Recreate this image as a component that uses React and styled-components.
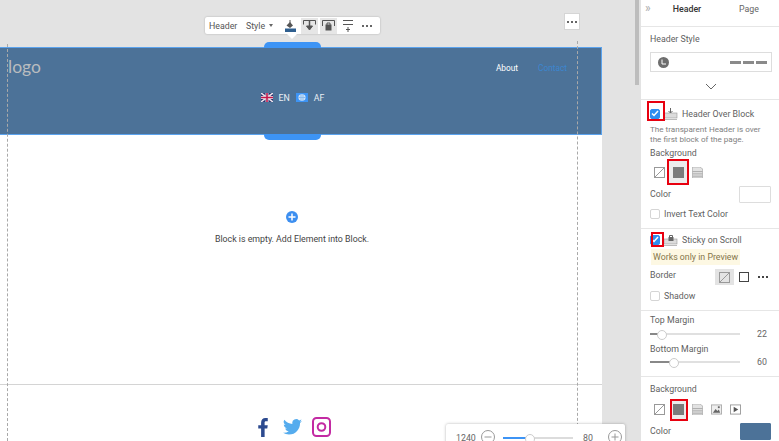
import React from "react";
import styled, { createGlobalStyle } from "styled-components";

const GlobalStyle = createGlobalStyle`
  html, body {
    margin: 0;
    padding: 0;
    background: #e3e3e3;
    font-family: Roboto, "Liberation Sans", sans-serif;
  }
  * { box-sizing: border-box; }
`;

const Screen = styled.div`
  display: flex;
  width: 779px;
  height: 441px;
  overflow: hidden;
  background: #e3e3e3;
`;

const Workspace = styled.div`
  position: relative;
  width: 635px;
  height: 441px;
  flex: none;
  padding-top: 47px;
`;

const Scrollbar = styled.div`
  width: 6px;
  flex: none;
  background: #e3e3e3;
  &::before {
    content: "";
    display: block;
    width: 4px;
    height: 85px;
    background: #bdbdbd;
  }
`;

const Page = styled.div`
  width: 602px;
  height: 394px;
  background: #fff;
  display: flex;
  flex-direction: column;
  color: #444;
`;

const Header = styled.header`
  height: 88px;
  flex: none;
  background: #4c7298;
  border: 1px solid #5ba3ee;
  border-left: 0;
  padding: 0 34px 0 8px;
  display: grid;
  grid-template-rows: 36px 1fr;
`;

const HeaderTop = styled.div`
  display: flex;
  align-items: center;
  justify-content: space-between;
`;

const Logo = styled.div`
  font-family: Lato, sans-serif;
  font-size: 17.5px;
  color: #b9bcbf;
`;

const Nav = styled.nav`
  display: flex;
  gap: 20px;
  font-size: 8.3px;
  margin-top: 3px;
`;

const NavLink = styled.span`
  color: ${(p) => (p.$active ? "#3c86cf" : "#fff")};
`;

const Languages = styled.div`
  display: flex;
  align-items: center;
  justify-content: center;
  gap: 6px;
  height: 27px;
  padding-left: 10px;
  font-size: 8.8px;
  color: #e8eef4;
`;

const Body = styled.div`
  height: 250px;
  flex: none;
  padding: 76px 25px 0 7px;
  display: flex;
  flex-direction: column;
  align-items: center;
  border-bottom: 1px solid #d4d4d4;
`;

const AddButton = styled.div`
  width: 12px;
  height: 12px;
  border-radius: 50%;
  background: #3d8ff0;
  display: flex;
  align-items: center;
  justify-content: center;
`;

const EmptyText = styled.div`
  font-size: 8.8px;
  line-height: 10px;
  margin-top: 11px;
  color: #444;
`;

const Socials = styled.div`
  display: flex;
  align-items: center;
  padding: 32px 0 0 258px;
`;

const Social = styled.span`
  display: flex;
  margin-right: ${(p) => p.$gap}px;
`;

const Guide = styled.div`
  position: absolute;
  top: ${(p) => p.$top}px;
  bottom: 0;
  left: ${(p) => p.$left}px;
  border-left: 1px dashed #a9a9a9;
`;

const Toolbar = styled.div`
  position: absolute;
  top: 17px;
  left: 205px;
  width: 175px;
  height: 17px;
  background: #fff;
  border-radius: 2px;
  box-shadow: 0 0 2px rgba(0, 0, 0, 0.25);
  display: flex;
  align-items: center;
  padding-left: 4px;
  font-size: 8.8px;
  color: #555;
  &::after {
    content: "";
    position: absolute;
    left: 82px;
    bottom: -5px;
    border-left: 5px solid transparent;
    border-right: 5px solid transparent;
    border-top: 5px solid #fff;
  }
`;

const ToolLabel = styled.span`
  width: ${(p) => p.$width}px;
  flex: none;
  white-space: nowrap;
  display: flex;
  align-items: center;
  gap: 4px;
`;

const Caret = styled.i`
  border-left: 2.5px solid transparent;
  border-right: 2.5px solid transparent;
  border-top: 3px solid #666;
`;

const ToolIcon = styled.span`
  width: 17px;
  height: 16px;
  margin-right: 2px;
  flex: none;
  display: flex;
  align-items: center;
  justify-content: center;
  background: ${(p) => (p.$on ? "#e6e6e6" : "transparent")};
`;

const DotsButton = styled.div`
  position: absolute;
  top: 13px;
  left: 564px;
  width: 16px;
  height: 17px;
  background: #fff;
  border: 1px solid #d5d5d5;
  display: flex;
  align-items: center;
  justify-content: center;
`;

const BlockHandle = styled.div`
  position: absolute;
  left: 264px;
  width: 57px;
  height: 6px;
  top: ${(p) => p.$top}px;
  background: #3d94f5;
  border-radius: ${(p) => (p.$bottom ? "0 0 5px 5px" : "5px 5px 0 0")};
`;

const ZoomBar = styled.div`
  position: absolute;
  top: 424px;
  left: 446px;
  width: 179px;
  height: 30px;
  background: #fff;
  border-radius: 2px;
  box-shadow: 0 0 3px rgba(0, 0, 0, 0.3);
  display: flex;
  align-items: flex-start;
  padding: 9px 3px 0 10px;
  font-size: 8.8px;
  line-height: 10px;
  color: #666;
`;

const ZoomValue = styled.span`
  width: 25px;
  flex: none;
`;

const RoundButton = styled.span`
  display: flex;
  flex: none;
  margin-top: -3px;
`;

const ZoomTrack = styled.div`
  position: relative;
  width: 70px;
  height: 2px;
  margin: 4px 10px 0 8px;
  flex: none;
  background: linear-gradient(to right, #3d94f5 34%, #dcdcdc 34%);
  &::after {
    content: "";
    position: absolute;
    left: 22px;
    top: -3px;
    width: 8px;
    height: 8px;
    border-radius: 50%;
    background: #fff;
    border: 1px solid #ccc;
  }
`;

const Panel = styled.aside`
  width: 138px;
  flex: none;
  height: 441px;
  background: #fff;
  color: #5f5f5f;
  font-size: 8.8px;
  line-height: 10px;
  overflow: hidden;
`;

const Tabs = styled.div`
  height: 27px;
  border-bottom: 1px solid #e6e6e6;
  display: grid;
  grid-template-columns: 18px 48px 1fr;
  align-items: start;
  padding: 4px 0 0 4px;
`;

const Collapse = styled.span`
  color: #aaa;
  font-size: 12px;
  line-height: 9px;
`;

const Tab = styled.span`
  text-align: center;
  font-weight: ${(p) => (p.$active ? 500 : 400)};
  color: ${(p) => (p.$active ? "#333" : "#666")};
  padding-left: ${(p) => (p.$active ? 0 : 8)}px;
`;

const Section = styled.section`
  height: ${(p) => p.$height}px;
  padding: ${(p) => p.$top || 0}px 7px 0 9px;
  border-bottom: 1px solid #e6e6e6;
  &:last-child {
    border-bottom: 0;
  }
`;

const Row = styled.div`
  display: flex;
  align-items: center;
  height: ${(p) => p.$height}px;
  gap: ${(p) => p.$gap || 0}px;
  padding-left: ${(p) => p.$pad || 0}px;
  margin-top: ${(p) => p.$mt || 0}px;
  justify-content: ${(p) => (p.$between ? "space-between" : "flex-start")};
`;

const StyleTitle = styled.div`
  padding-top: 1px;
`;

const StylePicker = styled.div`
  height: 20px;
  border: 1px solid #ddd;
  margin-top: 8px;
  display: flex;
  align-items: center;
  justify-content: space-between;
  padding: 0 4px 0 7px;
`;

const Dashes = styled.span`
  display: flex;
  gap: 2px;
  i {
    width: 11px;
    height: 3px;
    background: #8a8a8a;
  }
`;

const Chevron = styled.div`
  display: flex;
  justify-content: center;
  margin-top: 11px;
`;

const Check = styled.span`
  width: 10px;
  height: 10px;
  flex: none;
  position: relative;
  border-radius: 2px;
  display: flex;
  align-items: center;
  justify-content: center;
  background: ${(p) => (p.$checked ? "#2f8df0" : "#fff")};
  border: 1px solid ${(p) => (p.$checked ? "#2f8df0" : "#d5d5d5")};
  &::after {
    content: "";
    display: ${(p) => (p.$mark ? "block" : "none")};
    position: absolute;
    inset: ${(p) => p.$mark};
    border: 2.5px solid #e8000f;
  }
`;

const Hint = styled.p`
  margin: 0;
  font-size: 8.1px;
  line-height: 10px;
  color: #808080;
  white-space: nowrap;
`;

const BgOption = styled.span`
  width: 13px;
  height: 13px;
  flex: none;
  display: flex;
  align-items: center;
  justify-content: center;
  position: relative;
  svg {
    position: relative;
    z-index: 1;
  }
  &::after {
    content: "";
    display: ${(p) => (p.$mark ? "block" : "none")};
    position: absolute;
    inset: ${(p) => p.$mark};
    border: 2px solid #e8000f;
    background: #ececec;
  }
`;

const Swatch = styled.span`
  width: ${(p) => p.$width}px;
  height: 17px;
  margin-right: 1px;
  background: ${(p) => p.$color};
  border: 1px solid ${(p) => (p.$color === "#fff" ? "#ddd" : "#4c7298")};
  border-radius: 1px;
`;

const Notice = styled.div`
  height: 16px;
  width: 89px;
  margin-left: 1px;
  background: #fdf8e3;
  color: #85764a;
  display: flex;
  align-items: center;
  padding-left: 2px;
  white-space: nowrap;
`;

const BorderLabel = styled.span`
  flex: 1;
`;

const BorderIcon = styled.span`
  width: 19px;
  height: 16px;
  margin-top: 4px;
  display: flex;
  align-items: center;
  justify-content: center;
  background: ${(p) => (p.$on ? "#e3e3e3" : "transparent")};
`;

const Slider = styled.div`
  width: 90px;
  height: 2px;
  position: relative;
  background: linear-gradient(
    to right,
    #888 ${(p) => p.$at}px,
    #e0e0e0 ${(p) => p.$at}px
  );
  &::after {
    content: "";
    position: absolute;
    left: ${(p) => p.$at - 4}px;
    top: -3px;
    width: 8px;
    height: 8px;
    border-radius: 50%;
    background: #fff;
    border: 1px solid #ccc;
  }
`;

const SliderValue = styled.span`
  margin-left: auto;
  margin-right: 5px;
  color: #666;
`;

const Dots = ({ color = "#666" }) => (
  <svg width="10" height="4" viewBox="0 0 10 4">
    <rect x="0" y="1" width="2" height="2" fill={color} />
    <rect x="4" y="1" width="2" height="2" fill={color} />
    <rect x="8" y="1" width="2" height="2" fill={color} />
  </svg>
);

const CheckMark = () => (
  <svg width="8" height="7" viewBox="0 0 8 7" fill="none" stroke="#fff" strokeWidth="1.5">
    <path d="M1 3.5 3 5.500 7 1" />
  </svg>
);

const NoFill = () => (
  <svg width="11" height="11" viewBox="0 0 11 11" fill="none" stroke="#999">
    <rect x="0.5" y="0.5" width="10" height="10" />
    <path d="M1 10 10 1" />
  </svg>
);

const Solid = () => (
  <svg width="11" height="11" viewBox="0 0 11 11">
    <rect width="11" height="11" fill="#7b7b7b" />
  </svg>
);

const Gradient = () => (
  <svg width="11" height="11" viewBox="0 0 11 12">
    <path d="M0 0h8l3 2v10H0z" fill="#e2e2e2" stroke="#999" strokeWidth=".6" />
    <path d="M0 5h11M0 7.500h11M0 10h11" stroke="#a5a5a5" />
  </svg>
);

const ImageFill = () => (
  <svg width="11" height="11" viewBox="0 0 12 11">
    <rect x=".5" y=".5" width="11" height="10" fill="#eee" stroke="#aaa" />
    <path d="M2 9 5 5l2 2 1.500-1.500L10 9z" fill="#666" />
    <rect x="7.500" y="2" width="2" height="2" fill="#666" />
  </svg>
);

const VideoFill = () => (
  <svg width="11" height="11" viewBox="0 0 12 11">
    <rect x=".5" y=".5" width="11" height="10" fill="#fff" stroke="#999" />
    <path d="M4 2.500v6L9 5.500z" fill="#555" />
  </svg>
);

const OverBlockIcon = () => (
  <svg width="14" height="12" viewBox="0 0 14 12">
    <rect x="0" y="5" width="13" height="5" fill="#dcdcdc" stroke="#999" strokeWidth=".6" />
    <path d="M0 11.500h13" stroke="#bbb" />
    <path d="M6.500 0v5M4.500 3l2 2 2-2" stroke="#666" fill="none" />
  </svg>
);

const StickyIcon = () => (
  <svg width="14" height="12" viewBox="0 0 14 12">
    <rect x="0" y="5" width="13" height="5" fill="#dcdcdc" stroke="#999" strokeWidth=".6" />
    <path d="M0 11.500h13" stroke="#bbb" />
    <rect x="4.500" y="3" width="5" height="4" fill="#666" />
    <path d="M5.500 3V1.500h3V3" stroke="#666" fill="none" />
  </svg>
);

const FlagUK = () => (
  <svg width="12" height="9" viewBox="0 0 12 9">
    <rect width="12" height="9" fill="#2b2f6e" />
    <path d="M0 0 12 9M12 0 0 9" stroke="#e9e3e8" strokeWidth="1.6" />
    <path d="M6 0v9M0 4.500h12" stroke="#e9e3e8" strokeWidth="3" />
    <path d="M6 0v9M0 4.500h12" stroke="#c2184b" strokeWidth="1.6" />
  </svg>
);

const FlagAF = () => (
  <svg width="12" height="9" viewBox="0 0 12 9">
    <rect width="12" height="9" fill="#3d94f5" />
    <ellipse cx="6" cy="4.500" rx="3.600" ry="3.200" fill="#cfe3f8" />
    <path d="M2.500 4.500h7M4 3h4M4 6h4" stroke="#6fa9e6" strokeWidth=".7" />
  </svg>
);

const Facebook = () => (
  <svg width="10" height="19" viewBox="0 0 10 20">
    <path
      d="M3 20V11H0V7.500h3V5C3 1.800 4.800 0 7.500 0H10v3.500H8.200C7 3.500 6.700 4.100 6.700 5v2.500H10L9.500 11H6.700v9z"
      fill="#2c4a8f"
    />
  </svg>
);

const Twitter = () => (
  <svg width="19" height="16" viewBox="0 0 24 20">
    <path
      d="M24 2.400c-.9.4-1.800.7-2.800.8 1-.6 1.800-1.600 2.200-2.700-1 .6-2 1-3.100 1.200A4.900 4.900 0 0 0 11.900 6.200 14 14 0 0 1 1.700.9a4.900 4.900 0 0 0 1.500 6.600c-.8 0-1.600-.2-2.200-.6 0 2.400 1.700 4.400 3.900 4.900-.7.200-1.500.2-2.200.1.600 2 2.400 3.400 4.600 3.400A9.900 9.900 0 0 1 0 17.300 14 14 0 0 0 7.500 19.500c9.100 0 14.300-7.700 14-14.600 1-.7 1.800-1.500 2.500-2.500z"
      fill="#55acee"
    />
  </svg>
);

const Instagram = () => (
  <svg width="19" height="20" viewBox="0 0 19 20" fill="none" stroke="#c32aa3" strokeWidth="2">
    <rect x="1" y="1" width="17" height="18" rx="3.5" />
    <circle cx="9.5" cy="10" r="3.8" />
  </svg>
);

const Minus = () => (
  <svg width="14" height="14" viewBox="0 0 14 14" fill="none" stroke="#999">
    <circle cx="7" cy="7" r="6.5" />
    <path d="M3.500 7h7" />
  </svg>
);

const Plus = () => (
  <svg width="14" height="14" viewBox="0 0 14 14" fill="none" stroke="#999">
    <circle cx="7" cy="7" r="6.5" />
    <path d="M3.500 7h7M7 3.500v7" />
  </svg>
);

const tools = [
  <svg key="a" width="11" height="13" viewBox="0 0 11 13">
    <path d="M1.500 6.500 5 3l3 3.500L5 9z" fill="#555" />
    <path d="M5 1v3" stroke="#555" />
    <rect x="0" y="9.500" width="11" height="3.500" fill="#2f5f8f" />
  </svg>,
  <svg key="b" width="13" height="11" viewBox="0 0 13 11" fill="none" stroke="#555">
    <path d="M.5 4.500V.5h12v4" />
    <path d="M6.500 1v6" strokeWidth="1.5" />
    <path d="M3.500 6h6L6.500 10z" fill="#555" />
  </svg>,
  <svg key="c" width="13" height="11" viewBox="0 0 13 11" fill="none" stroke="#555">
    <path d="M.5 6V.5h12V6" />
    <rect x="4" y="5" width="5" height="5" fill="#555" />
    <path d="M5 5V3h3v2" />
  </svg>,
  <svg key="d" width="10" height="13" viewBox="0 0 10 13" fill="none" stroke="#555">
    <path d="M0 1.500h10M0 5.500h10" />
    <path d="M5 8v5M3 10.500h4" />
  </svg>,
];

const App = () => (
  <>
    <GlobalStyle />
    <Screen>
      <Workspace>
        <Page>
          <Header>
            <HeaderTop>
              <Logo>logo</Logo>
              <Nav>
                <NavLink>About</NavLink>
                <NavLink $active>Contact</NavLink>
              </Nav>
            </HeaderTop>
            <Languages>
              <FlagUK />
              <span>EN</span>
              <FlagAF />
              <span>AF</span>
            </Languages>
          </Header>
          <Body>
            <AddButton>
              <svg width="8" height="8" viewBox="0 0 8 8" stroke="#fff" strokeWidth="1.5">
                <path d="M0.500 4h7M4 0.500v7" />
              </svg>
            </AddButton>
            <EmptyText>Block is empty. Add Element into Block.</EmptyText>
          </Body>
          <Socials>
            <Social $gap={15}>
              <Facebook />
            </Social>
            <Social $gap={10}>
              <Twitter />
            </Social>
            <Social $gap={0}>
              <Instagram />
            </Social>
          </Socials>
        </Page>

        <Guide $left={7} $top={44} />
        <Guide $left={577} $top={41} />
        <BlockHandle $top={42} />
        <BlockHandle $top={134} $bottom />

        <Toolbar>
          <ToolLabel $width={37}>Header</ToolLabel>
          <ToolLabel $width={36}>
            Style <Caret />
          </ToolLabel>
          <ToolIcon>{tools[0]}</ToolIcon>
          <ToolIcon $on>{tools[1]}</ToolIcon>
          <ToolIcon $on>{tools[2]}</ToolIcon>
          <ToolIcon>{tools[3]}</ToolIcon>
          <ToolIcon>
            <Dots />
          </ToolIcon>
        </Toolbar>
        <DotsButton>
          <Dots />
        </DotsButton>

        <ZoomBar>
          <ZoomValue>1240</ZoomValue>
          <RoundButton>
            <Minus />
          </RoundButton>
          <ZoomTrack />
          <ZoomValue>80</ZoomValue>
          <RoundButton>
            <Plus />
          </RoundButton>
        </ZoomBar>
      </Workspace>

      <Scrollbar />

      <Panel>
        <Tabs>
          <Collapse>»</Collapse>
          <Tab $active>Header</Tab>
          <Tab>Page</Tab>
        </Tabs>

        <Section $height={73} $top={6}>
          <StyleTitle>Header Style</StyleTitle>
          <StylePicker>
            <svg width="11" height="11" viewBox="0 0 11 11">
              <circle cx="5.5" cy="5.5" r="5.5" fill="#6e6e6e" />
              <path d="M4 2.500V7h4" stroke="#fff" fill="none" />
            </svg>
            <Dashes>
              <i />
              <i />
              <i />
            </Dashes>
          </StylePicker>
          <Chevron>
            <svg width="12" height="7" viewBox="0 0 12 7" fill="none" stroke="#666">
              <path d="M1 1l5 5 5-5" />
            </svg>
          </Chevron>
        </Section>

        <Section $height={129} $top={3}>
          <Row $height={21} $gap={4}>
            <Check $checked $mark="-9px -6px -3px -4px">
              <CheckMark />
            </Check>
            <OverBlockIcon />
            <span>Header Over Block</span>
          </Row>
          <Hint>
            The transparent Header is over
            <br />
            the first block of the page.
          </Hint>
          <Row $height={18}>Background</Row>
          <Row $height={20} $gap={6} $pad={3}>
            <BgOption>
              <NoFill />
            </BgOption>
            <BgOption $mark="-7px -4px -6px -5px">
              <Solid />
            </BgOption>
            <BgOption>
              <Gradient />
            </BgOption>
          </Row>
          <Row $height={20} $mt={2} $between>
            <span>Color</span>
            <Swatch $width={32} $color="#fff" />
          </Row>
          <Row $height={20} $gap={4}>
            <Check />
            <span>Invert Text Color</span>
          </Row>
        </Section>

        <Section $height={82} $top={1}>
          <Row $height={19} $gap={4}>
            <Check $checked $mark="-4px -5px -3px 0">
              <CheckMark />
            </Check>
            <StickyIcon />
            <span>Sticky on Scroll</span>
          </Row>
          <Notice>Works only in Preview</Notice>
          <Row $height={20}>
            <BorderLabel>Border</BorderLabel>
            <BorderIcon $on>
              <NoFill />
            </BorderIcon>
            <BorderIcon>
              <svg width="10" height="10" viewBox="0 0 10 10" fill="none" stroke="#444">
                <rect x=".5" y=".5" width="9" height="9" />
              </svg>
            </BorderIcon>
            <BorderIcon>
              <Dots color="#444" />
            </BorderIcon>
          </Row>
          <Row $height={22} $gap={4}>
            <Check />
            <span>Shadow</span>
          </Row>
        </Section>

        <Section $height={66} $top={1}>
          <Row $height={16}>Top Margin</Row>
          <Row $height={11}>
            <Slider $at={11} />
            <SliderValue>22</SliderValue>
          </Row>
          <Row $height={20}>Bottom Margin</Row>
          <Row $height={6}>
            <Slider $at={23} />
            <SliderValue>60</SliderValue>
          </Row>
        </Section>

        <Section $height={64} $top={4}>
          <Row $height={16}>Background</Row>
          <Row $height={22} $gap={6} $pad={3} $mt={1}>
            <BgOption>
              <NoFill />
            </BgOption>
            <BgOption $mark="-4px -3px -5px -2px">
              <Solid />
            </BgOption>
            <BgOption>
              <Gradient />
            </BgOption>
            <BgOption>
              <ImageFill />
            </BgOption>
            <BgOption>
              <VideoFill />
            </BgOption>
          </Row>
          <Row $height={22} $between>
            <span>Color</span>
            <Swatch $width={31} $color="#4c7298" />
          </Row>
        </Section>
      </Panel>
    </Screen>
  </>
);

export default App;
